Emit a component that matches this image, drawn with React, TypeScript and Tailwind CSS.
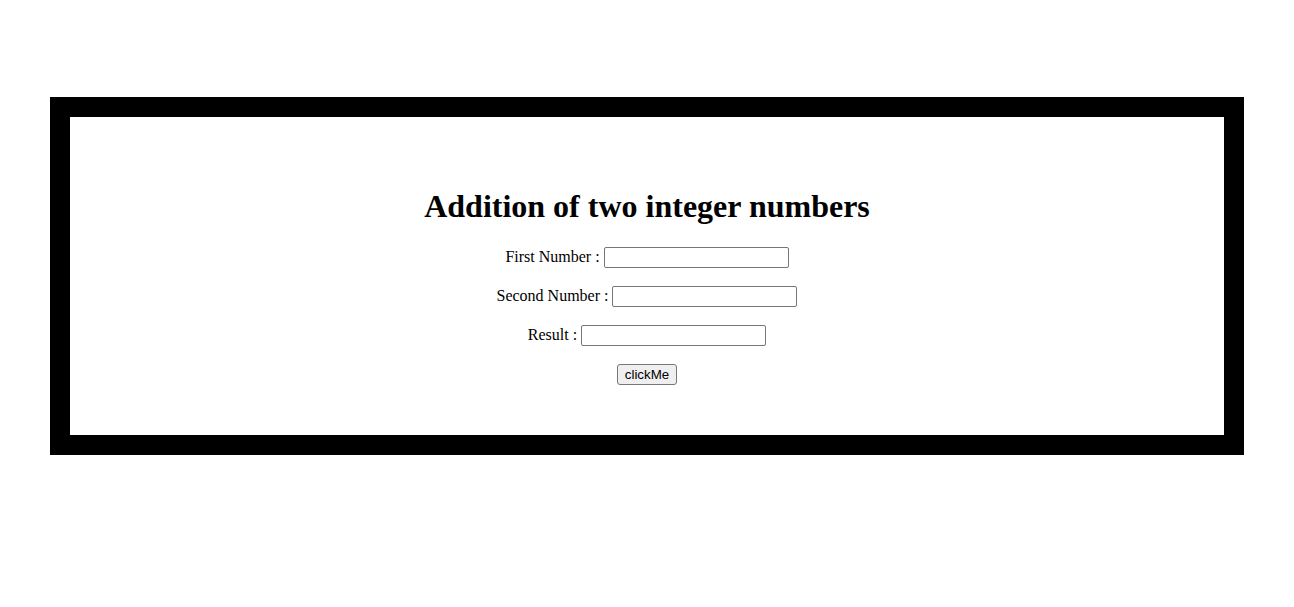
export default function App() {
  const rows = ['First Number :', 'Second Number :', 'Result :']

  return (
    <div className="min-h-[607px] bg-white pt-[97px] font-['Liberation_Serif',serif] text-black">
      <div className="mx-[50px] border-[20px] border-black bg-white">
        <div className="flex h-[318px] flex-col items-center pt-[70px]">
          <h1 className="h-[38px] text-[32px] font-bold leading-[38px]">Addition of two integer numbers</h1>
          <div className="mt-[13px] flex flex-col items-center">
            {rows.map((label) => (
              <div key={label} className="flex h-[39px] items-center text-[16px]">
                <span className="mb-[2px]">{label}</span>
                <input
                  type="text"
                  className="ml-[4px] h-[21px] w-[185px] rounded-[2px] border border-[#767676] bg-white px-[2px] text-[13px] outline-none"
                />
              </div>
            ))}
            <div className="flex h-[39px] items-center">
              <button
                type="button"
                className="h-[21px] w-[60px] rounded-[3px] border border-[#767676] bg-[#efefef] font-['Liberation_Sans',sans-serif] text-[13.33px] leading-[19px]"
              >
                clickMe
              </button>
            </div>
          </div>
        </div>
      </div>
    </div>
  )
}
